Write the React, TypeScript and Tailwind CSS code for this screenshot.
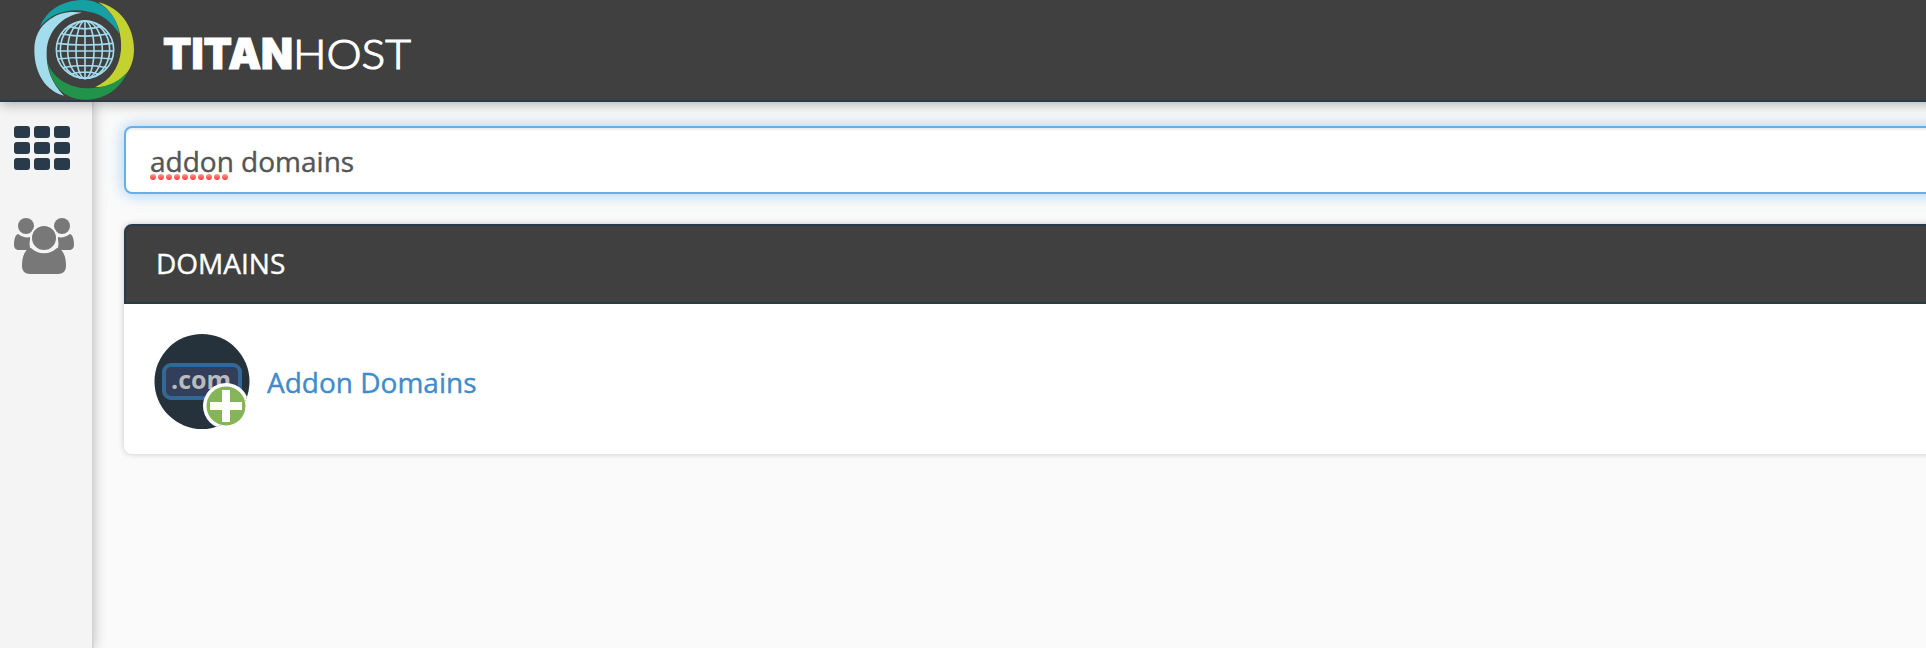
const tiles = [0, 1, 2, 3, 4, 5, 6, 7, 8];

function Globe() {
  return (
    <svg className="h-[100px] w-[130px] flex-none" viewBox="0 0 390 300" aria-hidden="true">
      <path fill="#a3dcec" d="M186 38C150 32 117 38 90 58 58 80 43 112 43 150c0 73 37 124 89 137-37-37-54-82-52-132 2-65 50-109 106-117Z" />
      <path fill="#15a0a4" d="M60 80C85 20 140 0 192 0c58 2 98 45 106 102-23-38-55-62-92-67C150 24 100 35 60 80Z" />
      <path fill="#c3d22e" d="M235 7c65 15 107 73 107 141 0 67-42 114-117 114 45-22 73-57 78-112C307 100 290 40 235 7Z" />
      <path fill="#21934a" d="M83 190c12 70 52 109 112 109 55 0 105-29 127-84-32 40-82 50-127 50-50-3-95-30-112-75Z" />
      <g fill="none" stroke="#a3dcec" strokeWidth="4.8">
        <circle cx="195" cy="149" r="86" />
        <ellipse cx="195" cy="149" rx="74" ry="86" />
        <ellipse cx="195" cy="149" rx="52" ry="86" />
        <ellipse cx="195" cy="149" rx="27" ry="86" />
        <path d="M195 63v172M145 79q50 15 100 0M124 101q71 15 142 0M111 130q84 10 168 0M109 153h172M113 177q82-9 164 0M128 203q67-13 134 0M151 223q44-14 88 0" />
      </g>
    </svg>
  );
}

function Wordmark() {
  return (
    <svg className="ml-3 h-[60px] w-[260px]" viewBox="0 0 260 60" fill="#fff">
      <text x="1" y="49" fontFamily="Inter, sans-serif" fontWeight="900" fontSize="42.5" textLength="130" lengthAdjust="spacingAndGlyphs" stroke="#fff" strokeWidth="1">TITAN</text>
      <text x="131" y="48.5" fontFamily="Lato, sans-serif" fontWeight="300" fontSize="42" textLength="118" lengthAdjust="spacingAndGlyphs" stroke="#fff" strokeWidth="1.2">HOST</text>
    </svg>
  );
}

function UsersIcon() {
  return (
    <svg className="mt-12 h-14 w-[60px]" viewBox="0 0 60 56" fill="#787878" aria-hidden="true">
      <circle cx="12" cy="8" r="8" />
      <circle cx="48" cy="8" r="8" />
      <path d="M4 16C1 17 0 22 0 27c0 3 2 5 5 5h12c-2-4-2-9 0-13-5 1-9 0-13-3ZM56 16c3 1 4 6 4 11 0 3-2 5-5 5H43c2-4 2-9 0-13 5 1 9 0 13-3Z" />
      <path d="M17 30c-6 1-9 8-9 18 0 5 3 8 8 8h28c5 0 8-3 8-8 0-10-3-17-9-18-7 7-19 7-26 0Z" />
      <circle cx="30" cy="20" r="13" stroke="#f4f4f4" strokeWidth="2" />
    </svg>
  );
}

function AddonIcon() {
  return (
    <svg className="h-24 w-24 flex-none" viewBox="0 0 96 96" aria-hidden="true">
      <defs>
        <clipPath id="disc"><circle cx="48" cy="47.5" r="47.5" /></clipPath>
      </defs>
      <circle cx="48" cy="47.5" r="47.5" fill="#26323b" />
      <rect x="10" y="31" width="76" height="33" rx="7" fill="#323e5a" stroke="#326896" strokeWidth="4" />
      <text x="17" y="55" fontFamily="Open Sans, sans-serif" fontWeight="700" fontSize="25" fill="#bbb" textLength="60" lengthAdjust="spacingAndGlyphs">.com</text>
      <circle cx="72" cy="72" r="23" fill="#fff" clipPath="url(#disc)" />
      <circle cx="72" cy="72" r="19.5" fill="#86b558" />
      <path d="M68 56h8v12h12v8H76v12h-8V76H56v-8h12Z" fill="#fff" />
    </svg>
  );
}

export default function App() {
  return (
    <div className="flex h-[648px] w-full flex-col overflow-hidden bg-[#fafafa] font-['Open_Sans',sans-serif] [-webkit-text-stroke:0.4px]">
      <header className="z-10 -mr-10 flex h-[102px] flex-none items-start border-b-2 border-[#293a4a] bg-[#404040] pl-5 shadow-[0_2px_12px_rgba(0,0,0,0.3)]">
        <Globe />
        <div className="pt-5">
          <Wordmark />
        </div>
      </header>
      <div className="flex min-h-0 flex-1">
        <aside className="w-[94px] flex-none border-r-2 border-[#d6d6d6] bg-[#f4f4f4] pl-3.5 pt-6 shadow-[0_0_12px_rgba(0,0,0,0.25)]">
          <div className="grid w-14 grid-cols-3 gap-1">
            {tiles.map((tile) => (
              <span key={tile} className="h-3 rounded-[3px] bg-[#293a4a]" />
            ))}
          </div>
          <UsersIcon />
        </aside>
        <main className="-mr-10 min-w-0 flex-1 pl-[30px] pt-6">
          <div className="flex h-[68px] items-center rounded-lg border-2 border-[#66afe9] bg-white pl-6 pt-0.5 text-[28px] text-[#555] shadow-[inset_0_2px_2px_rgba(0,0,0,0.075),0_0_16px_rgba(102,175,233,0.6)]">
            <span className="relative whitespace-pre">
              addon
              <svg className="absolute left-0 top-[34px] h-1.5 w-20" viewBox="0 0 80 6" aria-hidden="true">
                <defs>
                  <linearGradient id="dot" x1="0" y1="0" x2="0" y2="1">
                    <stop offset="0" stopColor="#ff9b94" />
                    <stop offset="1" stopColor="#ff3a2e" />
                  </linearGradient>
                </defs>
                {[3, 11, 19, 27, 35, 43, 51, 59, 67, 75].map((cx) => (
                  <circle key={cx} cx={cx} cy="3" r="3" fill="url(#dot)" />
                ))}
              </svg>
            </span>
            <span className="whitespace-pre"> domains</span>
          </div>
          <section className="mt-[30px] h-[230px] rounded-lg bg-white shadow-[0_0_6px_rgba(0,0,0,0.2)]">
            <h2 className="flex h-20 items-center rounded-t-lg border-2 border-[#293a4a] bg-[#404040] pb-0.5 pl-[30px] text-[28px] text-white">
              DOMAINS
            </h2>
            <div className="flex items-center gap-[17px] pl-[30px] pt-[30px]">
              <AddonIcon />
              <a className="text-[28px] text-[#428bca]">Addon Domains</a>
            </div>
          </section>
        </main>
      </div>
    </div>
  );
}
